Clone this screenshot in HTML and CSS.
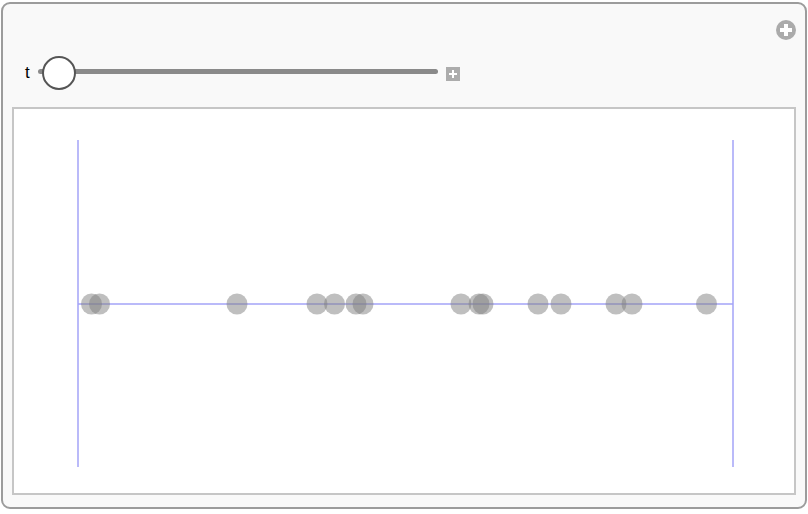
FILE: index.html
```html
<!DOCTYPE html>
<html>
<head>
<meta charset="utf-8">
<link rel="stylesheet" href="styles.css">
</head>
<body>
<div class="panel">
  <div class="topbar">
    <svg class="addicon" width="20" height="20" viewBox="0 0 20 20">
      <circle cx="10" cy="10" r="10" fill="#ababab"/>
      <rect x="8" y="4" width="4" height="12" fill="#fff"/>
      <rect x="4" y="8" width="12" height="4" fill="#fff"/>
    </svg>
  </div>
  <div class="sliderrow">
    <span class="label">t</span>
    <div class="slider">
      <div class="track"></div>
      <div class="thumb"></div>
    </div>
    <svg class="plusbtn" width="14" height="14" viewBox="0 0 14 14">
      <rect width="14" height="14" fill="#acacac"/>
      <rect x="6" y="3" width="2" height="8" fill="#fff"/>
      <rect x="3" y="6" width="8" height="2" fill="#fff"/>
    </svg>
  </div>
  <div class="frame">
    <svg class="plot" width="780" height="384" viewBox="0 0 780 384">
      <g stroke="#a3a3f7" stroke-width="1.5">
        <line x1="64" y1="31" x2="64" y2="358"/>
        <line x1="719" y1="31" x2="719" y2="358"/>
        <line x1="64" y1="195" x2="719" y2="195"/>
      </g>
      <g fill="#7f7f7f" fill-opacity="0.5">
        <circle cx="77.5" cy="195" r="10.5"/>
        <circle cx="85.5" cy="195" r="10.5"/>
        <circle cx="223" cy="195" r="10.5"/>
        <circle cx="303" cy="195" r="10.5"/>
        <circle cx="320.5" cy="195" r="10.5"/>
        <circle cx="342" cy="195" r="10.5"/>
        <circle cx="349" cy="195" r="10.5"/>
        <circle cx="447" cy="195" r="10.5"/>
        <circle cx="465" cy="195" r="10.5"/>
        <circle cx="469" cy="195" r="10.5"/>
        <circle cx="524" cy="195" r="10.5"/>
        <circle cx="547" cy="195" r="10.5"/>
        <circle cx="602" cy="195" r="10.5"/>
        <circle cx="618" cy="195" r="10.5"/>
        <circle cx="692.5" cy="195" r="10.5"/>
      </g>
    </svg>
  </div>
</div>
</body>
</html>
```

FILE: styles.css
```css
html, body {
  margin: 0;
  padding: 0;
  background: #ffffff;
}
.panel {
  box-sizing: border-box;
  margin: 2px 0 0 1px;
  width: 806px;
  height: 507px;
  border: 2px solid #9c9c9c;
  border-radius: 9px;
  background: #f9f9f9;
  padding: 0 9px 0 9px;
  display: flex;
  flex-direction: column;
}
.topbar {
  height: 36px;
  display: flex;
  justify-content: flex-end;
  align-items: flex-end;
}
.addicon {
  display: block;
}
.sliderrow {
  margin-top: 16px;
  height: 34px;
  display: flex;
  align-items: center;
}
.label {
  font-family: "Liberation Sans", Arial, sans-serif;
  font-size: 17px;
  color: #000;
  margin-left: 13px;
  width: 13px;
}
.slider {
  position: relative;
  width: 400px;
  height: 34px;
}
.track {
  position: absolute;
  left: 0;
  top: 13px;
  width: 400px;
  height: 5px;
  border-radius: 3px;
  background: #8a8a8a;
}
.thumb {
  position: absolute;
  left: 4px;
  top: 0;
  box-sizing: border-box;
  width: 34px;
  height: 34px;
  border-radius: 50%;
  border: 2px solid #555555;
  background: #ffffff;
}
.plusbtn {
  display: block;
  margin-left: 8px;
  margin-top: 2px;
}
.frame {
  margin-top: 17px;
  box-sizing: border-box;
  width: 784px;
  height: 388px;
  border: 2px solid #c6c6c6;
  background: #ffffff;
}
.plot {
  display: block;
}
```
